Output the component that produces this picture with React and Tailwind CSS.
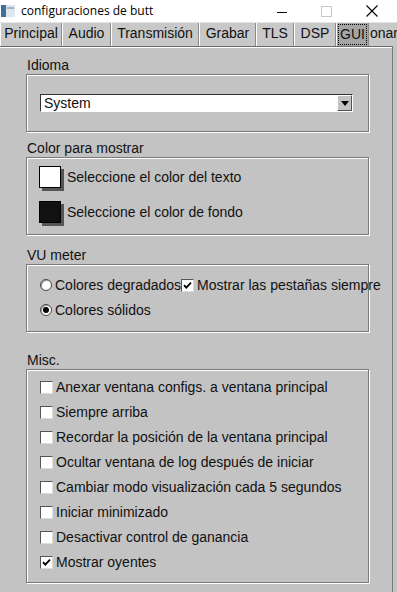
import React from 'react';

const tabs = [
    { label: 'Principal', w: 'w-[62px]' },
    { label: 'Audio', w: 'w-[49px]' },
    { label: 'Transmisión', w: 'w-[88px]' },
    { label: 'Grabar', w: 'w-[57px]' },
    { label: 'TLS', w: 'w-[38px]' },
    { label: 'DSP', w: 'w-[42px]' },
];

const miscOptions = [
    { label: 'Anexar ventana configs. a ventana principal', checked: false },
    { label: 'Siempre arriba', checked: false },
    { label: 'Recordar la posición de la ventana principal', checked: false },
    { label: 'Ocultar ventana de log después de iniciar', checked: false },
    { label: 'Cambiar modo visualización cada 5 segundos', checked: false },
    { label: 'Iniciar minimizado', checked: false },
    { label: 'Desactivar control de ganancia', checked: false },
    { label: 'Mostrar oyentes', checked: true },
];

function CheckBox({ checked }) {
    return (
        <span className="flex h-[13px] w-[13px] shrink-0 items-center justify-center border border-t-[#555] border-l-[#555] border-r-[#dcdcdc] border-b-[#dcdcdc] bg-white">
            {checked && (
                <svg width="9" height="9" viewBox="0 0 9 9">
                    <path d="M1 4.2 L3.3 6.6 L8 1.6" fill="none" stroke="#000" strokeWidth="1.8" />
                </svg>
            )}
        </span>
    );
}

function Radio({ checked }) {
    return (
        <span className="flex h-[12px] w-[12px] shrink-0 items-center justify-center rounded-full border border-[#444] bg-white shadow-[inset_1px_1px_0_#999]">
            {checked && <span className="h-[6px] w-[6px] rounded-full bg-black" />}
        </span>
    );
}

function Group({ label, labelTop, height, children }) {
    return (
        <div className={labelTop}>
            <div className="h-[16px] pl-[1px] text-[14px] leading-[14px] text-[#111]">{label}</div>
            <div className={`relative w-[343px] border border-[#7a7a7a] shadow-[inset_1px_1px_0_#fff,1px_1px_0_#fff] ${height}`}>
                {children}
            </div>
        </div>
    );
}

export default function App() {
    return (
        <div className="relative h-[592px] w-[397px] overflow-hidden bg-[#c3c3c3] font-['Liberation_Sans',Arial,sans-serif] text-[#111]">
            {/* title bar */}
            <div className="flex h-[22px] items-center bg-white">
                <svg width="14" height="12" viewBox="0 0 14 12" className="ml-[1px]">
                    <rect x="0" y="0" width="14" height="12" fill="#dfe6ee" />
                    <rect x="0" y="0" width="5" height="12" fill="#3f6f9a" />
                    <rect x="6" y="2" width="7" height="2" fill="#9fb4c8" />
                </svg>
                <span className="ml-[6px] font-['Open_Sans',sans-serif] text-[12px] text-black">configuraciones de butt</span>
                <div className="ml-auto flex h-full items-center">
                    <svg width="12" height="12" viewBox="0 0 12 12" className="mr-[33px]">
                        <path d="M1 7.5 H11" stroke="#000" strokeWidth="1" />
                    </svg>
                    <svg width="11" height="11" viewBox="0 0 11 11" className="mr-[34px]">
                        <rect x="0.5" y="0.5" width="10" height="10" fill="none" stroke="#c8c8c8" />
                    </svg>
                    <svg width="12" height="12" viewBox="0 0 12 12" className="mr-[19px]">
                        <path d="M0.5 0.5 L11.5 11.5 M11.5 0.5 L0.5 11.5" stroke="#000" strokeWidth="1.1" />
                    </svg>
                </div>
            </div>
            <div className="h-[1px] bg-[#e6e6e6]" />

            {/* tabs */}
            <div className="flex h-[23px] items-stretch text-[14px] leading-[21px]">
                {tabs.map((t) => (
                    <div
                        key={t.label}
                        className={`${t.w} shrink-0 border-l border-r border-l-white border-r-[#8a8a8a] bg-[#c8c8c8] text-center`}
                    >
                        {t.label}
                    </div>
                ))}
                <div className="w-[33px] shrink-0 border-l border-r border-l-white border-r-[#8a8a8a] bg-[#a5a5a5] p-[1px]">
                    <div className="h-full border border-dotted border-black text-center leading-[18px]">GUI</div>
                </div>
                <div className="shrink-0 pl-[1px] bg-[#c8c8c8]">onar</div>
            </div>

            {/* panel */}
            <div className="h-[546px] border-t border-r border-t-[#6a6a6a] border-r-[#7a7a7a] mr-[4px] shadow-[inset_0_1px_0_#fff]">
                <div className="flex flex-col pl-[26px]">
                    <Group label="Idioma" labelTop="mt-[11px]" height="h-[58px]">
                        <div className="ml-[13px] mt-[19px] flex h-[18px] w-[313px] border border-t-[#333] border-l-[#333] border-r-white border-b-white bg-white">
                            <span className="flex-1 pl-[3px] text-[14px] leading-[16px]">System</span>
                            <span className="flex w-[15px] items-center justify-center border border-t-white border-l-white border-r-[#555] border-b-[#555] bg-[#c3c3c3]">
                                <svg width="8" height="5" viewBox="0 0 8 5">
                                    <path d="M0 0 H8 L4 5 Z" fill="#000" />
                                </svg>
                            </span>
                        </div>
                    </Group>

                    <Group label="Color para mostrar" labelTop="mt-[9px]" height="h-[78px]">
                        <div className="ml-[12px] mt-[8px] flex items-center">
                            <span className="h-[22px] w-[22px] border border-black bg-white shadow-[3px_3px_0_#555]" />
                            <span className="ml-[6px] text-[14px]">Seleccione el color del texto</span>
                        </div>
                        <div className="ml-[12px] mt-[13px] flex items-center">
                            <span className="h-[22px] w-[22px] border border-black bg-[#111] shadow-[3px_3px_0_#555]" />
                            <span className="ml-[6px] text-[14px]">Seleccione el color de fondo</span>
                        </div>
                    </Group>

                    <Group label="VU meter" labelTop="mt-[13px]" height="h-[68px]">
                        <div className="ml-[13px] mt-[12px] flex h-[16px] items-center whitespace-nowrap text-[14px]">
                            <Radio checked={false} />
                            <span className="ml-[3px]">Colores degradados</span>
                            <CheckBox checked />
                            <span className="ml-[3px]">Mostrar las pestañas siempre</span>
                        </div>
                        <div className="ml-[13px] mt-[9px] flex h-[16px] items-center text-[14px]">
                            <Radio checked />
                            <span className="ml-[3px]">Colores sólidos</span>
                        </div>
                    </Group>

                    <Group label="Misc." labelTop="mt-[21px]" height="h-[214px]">
                        <div className="ml-[13px] mt-[5px] flex flex-col">
                            {miscOptions.map((o) => (
                                <div key={o.label} className="flex h-[25px] items-center text-[14px]">
                                    <CheckBox checked={o.checked} />
                                    <span className="ml-[3px]">{o.label}</span>
                                </div>
                            ))}
                        </div>
                    </Group>
                </div>
            </div>
        </div>
    );
}
